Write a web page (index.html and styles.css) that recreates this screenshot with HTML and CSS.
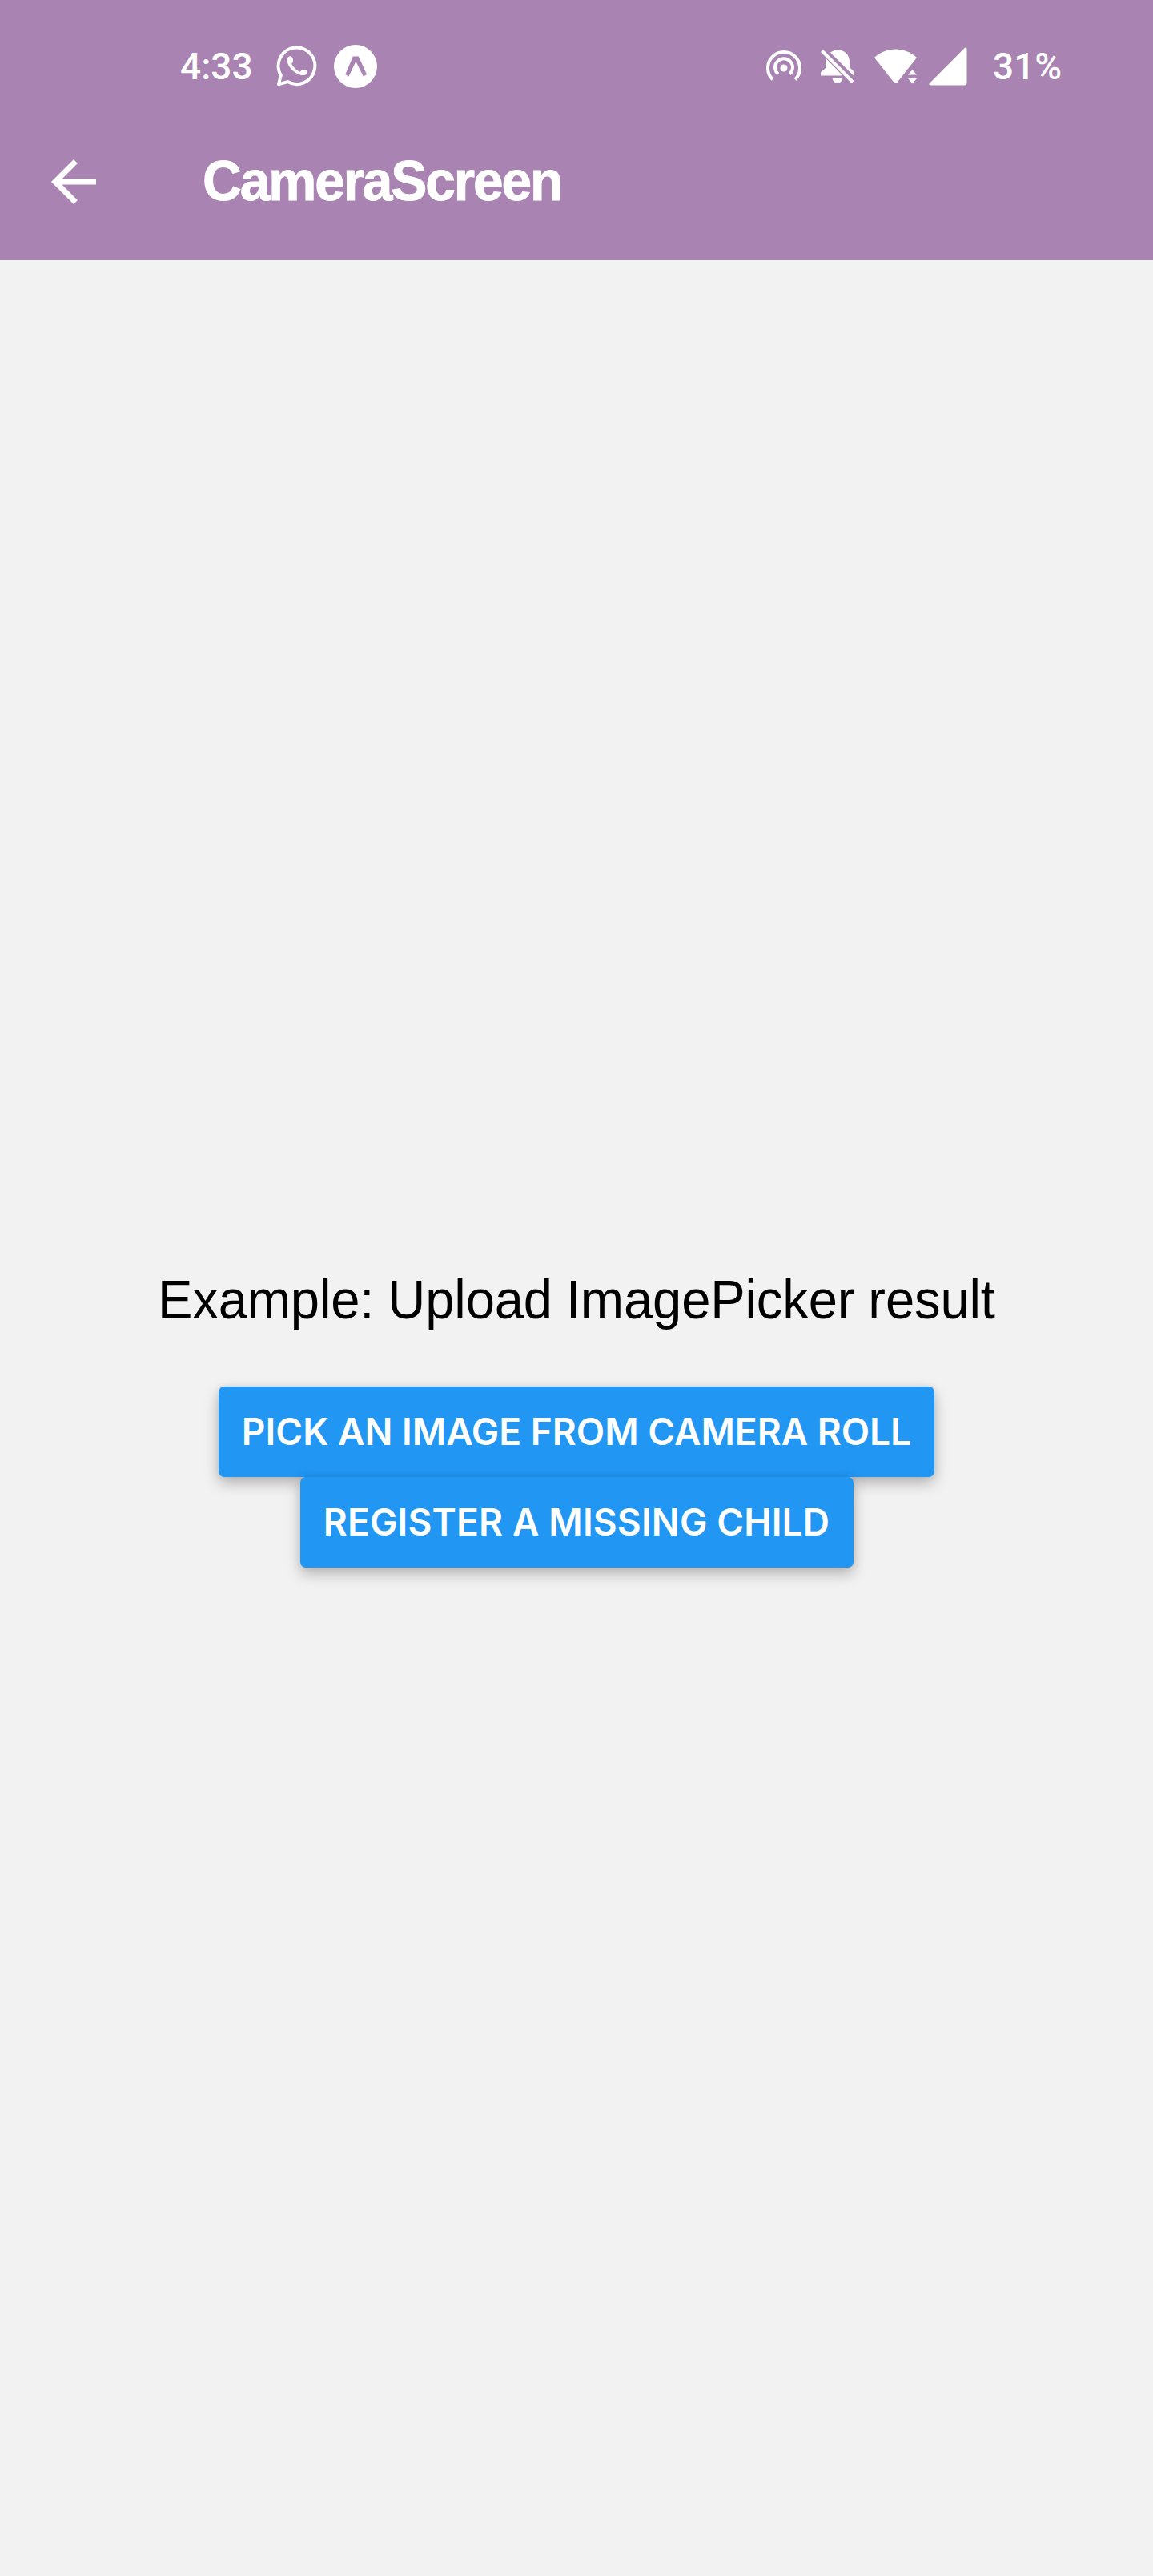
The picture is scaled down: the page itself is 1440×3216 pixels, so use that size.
FILE: index.html
```html
<!DOCTYPE html>
<html lang="en">
<head>
<meta charset="utf-8">
<title>CameraScreen</title>
<link rel="stylesheet" href="styles.css">
</head>
<body>
<header class="header">
  <div class="status">
    <div class="status-left">
      <span class="clock">4:33</span>
      <svg class="whatsapp" width="52" height="52" viewBox="0 0 52 52">
        <path d="M25.500 2.500a22.800 22.800 0 1 1-11.300 42.600L3 48.200 5.800 37A22.800 22.800 0 0 1 25.500 2.500Z" fill="none" stroke="#fff" stroke-width="4" stroke-linejoin="round"/>
        <path d="M13.500 17.500c0-3 3.500-5.500 5.800-3.500 1.700 1.500 2.200 4.500 1.400 6.500-.5 1.300-1.800 1.500-1.300 2.800 2 4 5.500 7.200 9.500 9.200 1.400.6 1.600-.9 2.800-1.700 2.200-1.300 5.600-.6 6.700 1 1.500 2.400-.8 5-4 5.200C25 37.500 13.500 27 13.500 17.500Z" fill="#fff"/>
      </svg>
      <svg class="expo" width="54" height="54" viewBox="0 0 54 54">
        <circle cx="27" cy="27" r="27" fill="#fff"/>
        <path d="M23.800 14.500h7L41 37l-4.200 2.500-9.400-18.800L18.500 39.500 14.400 37Z" fill="#a983b1"/>
      </svg>
    </div>
    <div class="status-right">
      <svg class="hotspot" width="44" height="40" viewBox="0 0 44 40" fill="none" stroke="#fff" stroke-width="4">
        <path d="M8 36.300a20 20 0 1 1 28 0M14.800 29.500a11 11 0 1 1 14.400 0"/>
        <circle cx="22" cy="22" r="4.500" fill="#fff" stroke="none"/>
      </svg>
      <svg class="bell" width="42" height="42" viewBox="0 0 42 42" fill="#fff">
        <path d="M12 3.800C22-3.500 36 2 36 15v7L42 28v4h-1.500ZM6.500 11 27.500 32.500H0v-4l6-5.500V16C6 14 6 12.500 6.500 11ZM14.500 35.500h13c-1 8-12 8-13 0Z"/>
        <path d="M1.500 1.500 40 40.500" stroke="#fff" stroke-width="4"/>
      </svg>
      <svg class="wifi" width="54" height="44" viewBox="0 0 54 44" fill="#fff">
        <path d="M0 11C15-3 38-3 53 11L28.500 42q-2 2-4 0ZM42 32.500h11L47.500 26ZM42 37h11l-5.500 6.500Z"/>
      </svg>
      <svg class="signal" width="48" height="48" viewBox="0 0 48 48"><path d="M1 45 44.500 1.200Q47.500-1 47.500 2.500V44.500Q47.500 47.500 44.500 47.500H2Q-1 47 1 45Z" fill="#fff"/></svg>
      <span class="battery">31%</span>
    </div>
  </div>
  <div class="appbar">
    <svg width="84" height="84" viewBox="0 0 24 24"><path d="M20 11H7.830l5.590-5.590L12 4l-8 8 8 8 1.410-1.410L7.830 13H20v-2z" fill="#fff"/></svg>
    <h1 class="title">CameraScreen</h1>
  </div>
</header>
<main class="content">
  <p class="message">Example: Upload ImagePicker result</p>
  <button class="button button-pick">Pick an image from camera roll</button>
  <button class="button button-register">Register a missing child</button>
</main>
</body>
</html>
```

FILE: styles.css
```css
* { box-sizing: border-box; }
body {
  margin: 0;
  min-height: 3216px;
  display: flex;
  flex-direction: column;
  background: #f2f2f2;
  font-family: "Liberation Sans", Arial, sans-serif;
}
.header {
  height: 324px;
  background: #a983b1;
  color: #fff;
}
.status {
  height: 166px;
  padding: 0 114px 0 225px;
  display: flex;
  justify-content: space-between;
  font: 500 46px/169px Roboto, sans-serif;
}
.status-left, .status-right {
  display: flex;
  align-items: center;
}
.clock { width: 120px; }
.expo { margin-left: 20px; }
.bell { margin-left: 24px; }
.wifi { margin-left: 25px; }
.signal { margin-left: 14px; }
.battery { width: 86px; margin-left: 32px; }
.appbar {
  display: flex;
  align-items: center;
  height: 122px;
  padding-left: 50px;
}
.title {
  margin: 0 0 3px 119px;
  font-size: 70px;
  line-height: 84px;
  letter-spacing: -2.200px;
  transform: scaleX(.966);
  transform-origin: left;
  -webkit-text-stroke: 1px currentColor;
}
.content {
  flex: 1;
  display: flex;
  flex-direction: column;
  align-items: center;
  padding-top: 1258px;
}
.message {
  margin: 0 0 69px;
  font-size: 68px;
  line-height: 80px;
  letter-spacing: -.150px;
  word-spacing: -1px;
  transform: scaleX(.958);
  white-space: nowrap;
}
.button {
  height: 113px;
  padding: 0;
  border: 0;
  border-radius: 7px;
  background: #2196f3;
  color: #fff;
  font: 600 46px/113px Inter, sans-serif;
  text-transform: uppercase;
  white-space: nowrap;
  box-shadow: 0 8px 18px rgba(0, 0, 0, .25), 0 0 10px rgba(0, 0, 0, .08);
}
.button-pick { width: 894px; }
.button-register { width: 691px; letter-spacing: .15px; }
```
